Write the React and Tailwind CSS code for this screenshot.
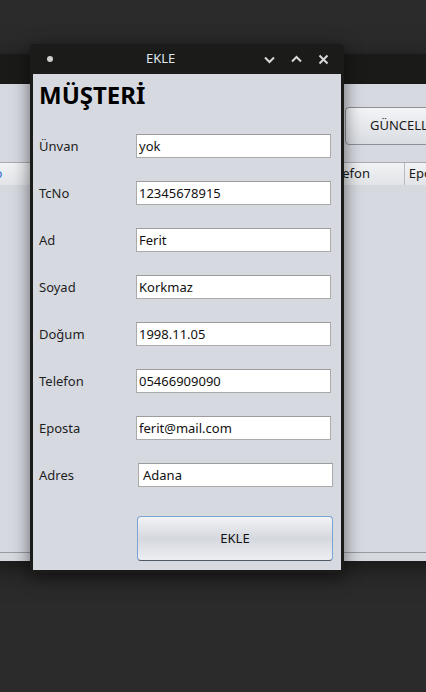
import { useState } from 'react'

const fields = [
  ['Ünvan', 'yok'],
  ['TcNo', '12345678915'],
  ['Ad', 'Ferit'],
  ['Soyad', 'Korkmaz'],
  ['Doğum', '1998.11.05'],
  ['Telefon', '05466909090'],
  ['Eposta', 'ferit@mail.com'],
  ['Adres', 'Adana'],
]

function BackWindow() {
  return (
    <div className="absolute left-[-20px] top-[54px] w-[470px] h-[507px] flex flex-col shadow-[0_6px_24px_rgba(0,0,0,0.5)]">
      <div className="h-[30px] bg-[#1a1b19]" />
      <div className="relative flex-1 bg-[#d6d9e0]">
        <div className="absolute left-[365px] top-[23px] w-[120px] h-[38px] rounded-[4px] border border-[#8d9096] bg-gradient-to-b from-[#f3f4f6] to-[#d9dce2] flex items-center pl-[24px] text-[13px] text-[#1a1a1a]">
          GÜNCELLE
        </div>
        <div className="absolute left-0 right-0 top-[78px] h-[23px] border-t border-[#a9abb0] bg-gradient-to-b from-[#f1f2f4] to-[#e2e4e8] flex text-[13px] text-[#1a1a1a]">
          <div className="w-[48px] flex items-center justify-end pr-[25px]">
            <span className="text-[#2f6fd0]">o</span>
          </div>
          <div className="w-[380px] border-r border-[#b8bac0] flex items-center pl-[298px]">Telefon</div>
          <div className="flex items-center pl-[4px]">Eposta</div>
        </div>
        <div className="absolute left-0 right-0 top-[468px] h-px bg-[#9a9ba0]" />
      </div>
    </div>
  )
}

function TitleBar() {
  return (
    <div className="h-[30px] flex items-center rounded-t-[5px] bg-[#1b1c1a]">
      <span className="ml-[17px] w-[6px] h-[6px] rounded-full bg-[#cfcfcf]" />
      <span className="ml-[93px] text-[13px] text-[#dfe6ee]">EKLE</span>
      <div className="ml-auto mr-[15px] flex items-center gap-[16px]">
        <svg width="11" height="11" viewBox="0 0 11 11" fill="none" stroke="#d8d8d8" strokeWidth="2">
          <path d="M1 3.5 L5.5 8 L10 3.5" />
        </svg>
        <svg width="11" height="11" viewBox="0 0 11 11" fill="none" stroke="#d8d8d8" strokeWidth="2">
          <path d="M1 7.5 L5.5 3 L10 7.5" />
        </svg>
        <svg width="11" height="11" viewBox="0 0 11 11" fill="none" stroke="#d8d8d8" strokeWidth="2">
          <path d="M1.5 1.5 L9.5 9.5 M9.5 1.5 L1.5 9.5" />
        </svg>
      </div>
    </div>
  )
}

export default function App() {
  const [values, setValues] = useState(fields.map((f) => f[1]))

  return (
    <div className="relative w-[426px] h-[692px] overflow-hidden bg-[#2b2b2b] font-['Noto_Sans',sans-serif]">
      <BackWindow />

      <div className="absolute left-[30px] top-[44px] w-[314px] h-[529px] flex flex-col bg-[#1b1c1a] rounded-t-[5px] shadow-[0_4px_18px_rgba(0,0,0,0.55)]">
        <TitleBar />
        <div className="mx-[3px] mb-[3px] flex-1 bg-[#d6d9e0] pl-[6px] text-[#1e1e1e]">
          <div className="h-[48px] pt-[5px] text-[24px] leading-[32px] font-bold text-black">MÜŞTERİ</div>
          {fields.map(([label], i) => (
            <div key={label} className="h-[47px] flex items-center text-[13px]">
              <span className="w-[97px] pt-[3px]">{label}</span>
              <input
                value={values[i]}
                onChange={(e) => {
                  const next = [...values]
                  next[i] = e.target.value
                  setValues(next)
                }}
                className={`${i === 7 ? 'ml-[2px] pl-[4px]' : 'pl-[2px]'} w-[195px] h-[24px] bg-white border border-[#aaaaaa] border-t-[#9c9c9c] text-[13px] text-[#111] outline-none`}
              />
            </div>
          ))}
          <button className="mt-[18px] ml-[98px] w-[196px] h-[45px] rounded-[4px] border border-[#7aa5d3] border-b-[#505a66] bg-gradient-to-b from-[#f2f3f5] via-[#d5d8de] to-[#eceef2] text-[13px] text-[#111]">
            EKLE
          </button>
        </div>
      </div>
    </div>
  )
}
